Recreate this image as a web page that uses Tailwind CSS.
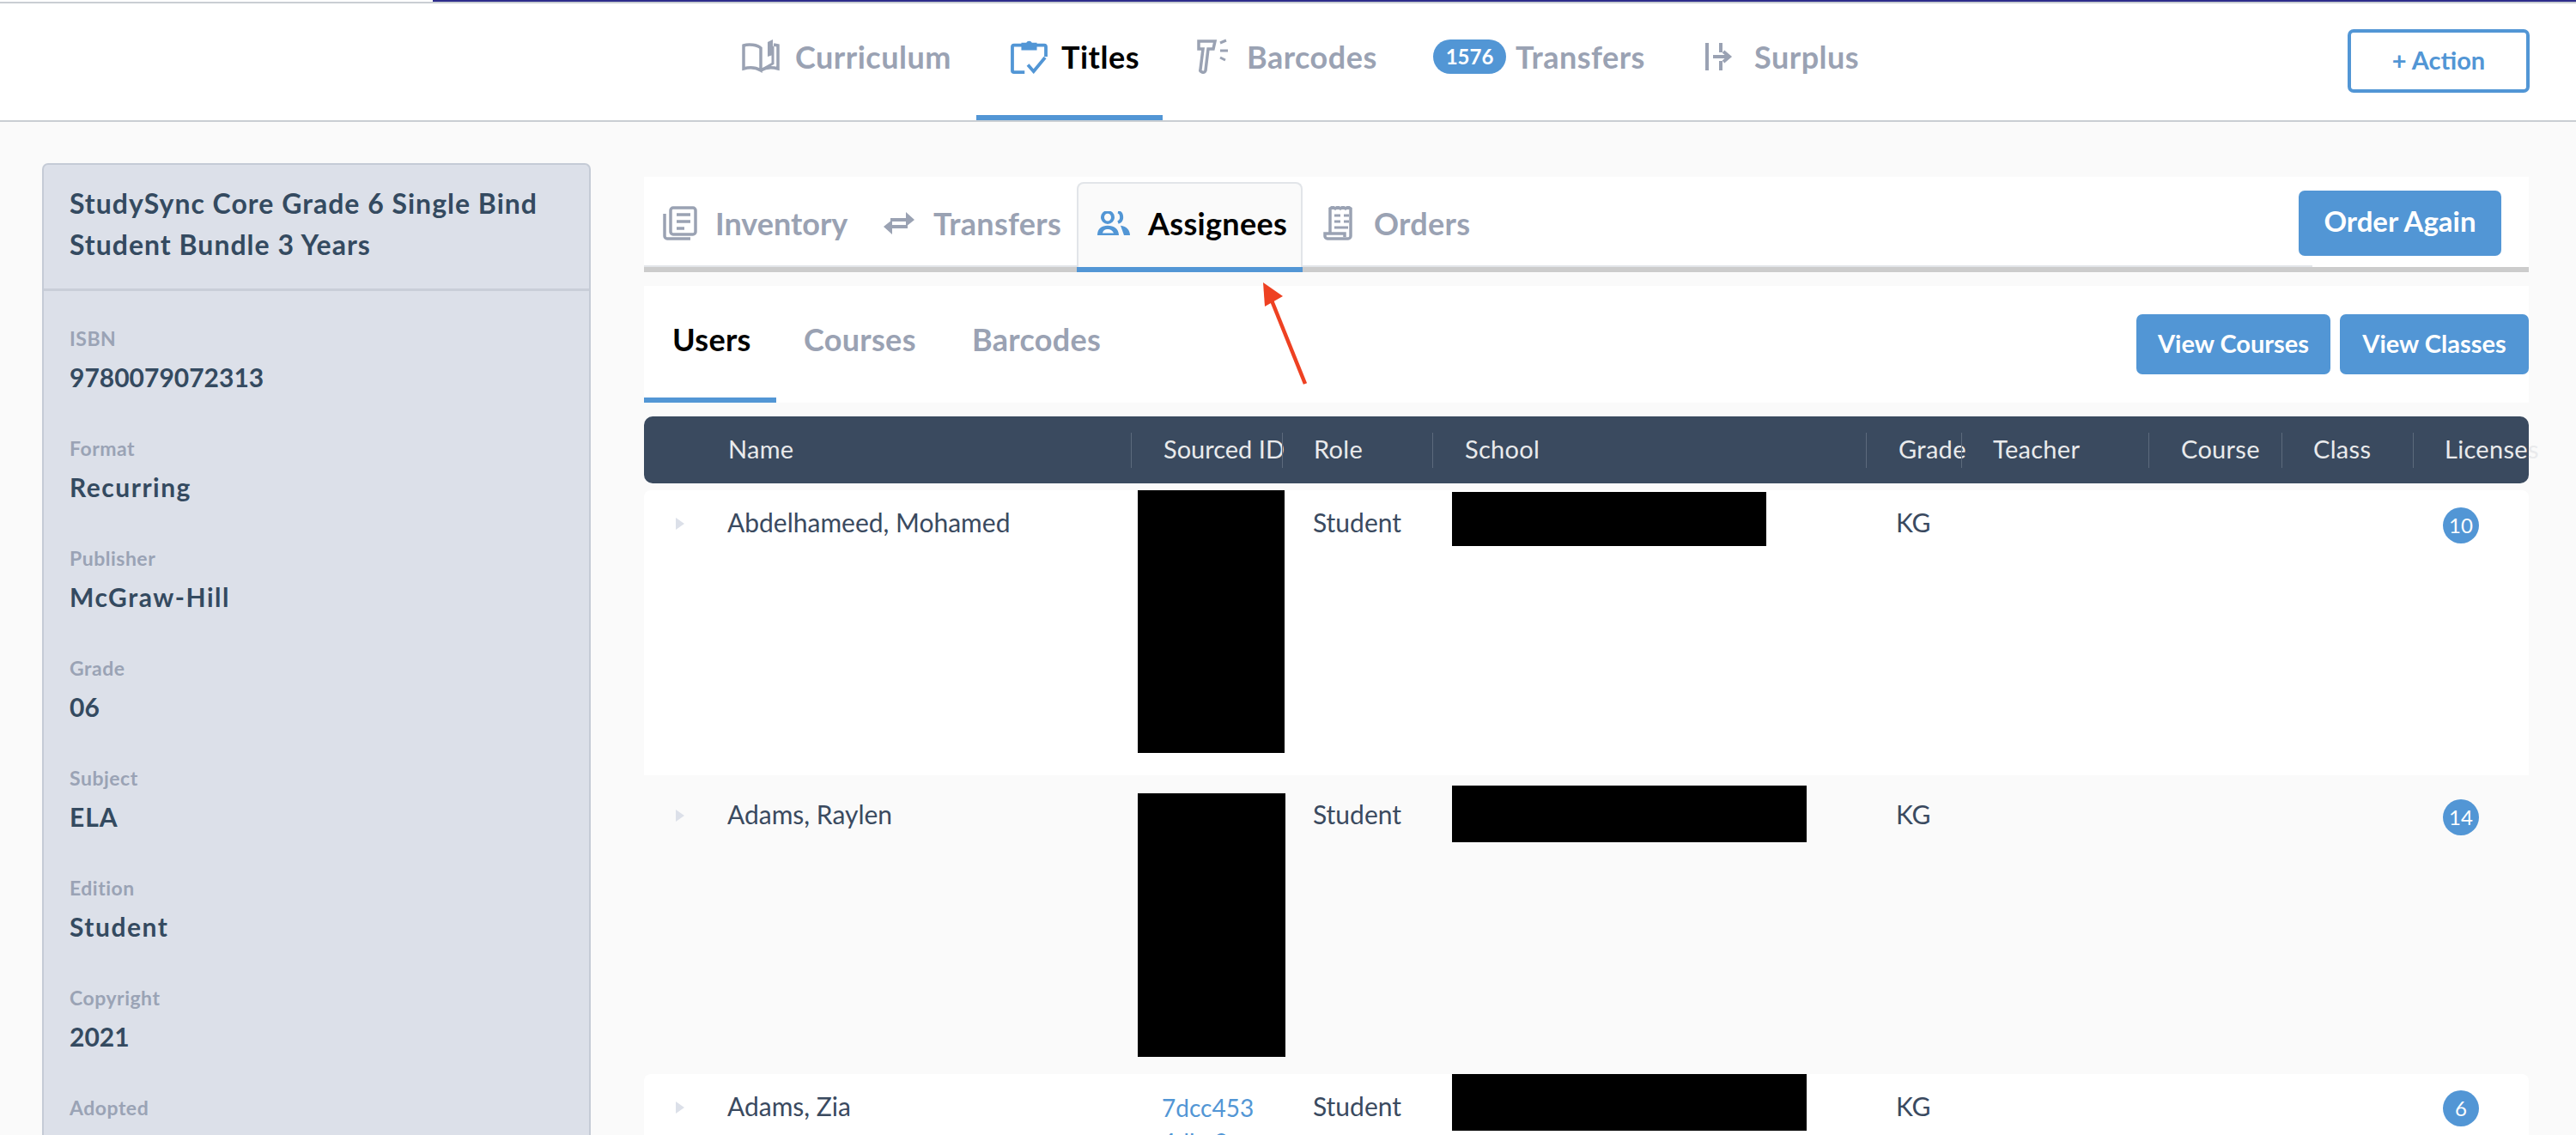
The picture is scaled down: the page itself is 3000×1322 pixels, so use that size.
<!doctype html>
<html><head><meta charset="utf-8">
<script src="https://cdn.jsdelivr.net/npm/@tailwindcss/browser@4"></script>
</head>
<body class="bg-[#fafafa] font-['Lato','Liberation_Sans',sans-serif] w-[3000px] h-[1322px] overflow-hidden relative">
<!-- top strip -->
<div class="h-[4px] flex flex-col"><div class="h-[2px] flex"><div class="w-[504px] bg-white"></div><div class="flex-1 bg-[#2e2d8c]"></div></div><div class="h-[2px] bg-[#c9ced3]"></div></div>
<!-- header -->
<header class="h-[138px] bg-white border-b-2 border-[#c9ced3] relative flex items-center">
  <nav class="flex items-stretch h-full pl-[864px] text-[36px] tracking-[0.5px] font-bold text-[#9aa2b3] leading-none">
    <div class="flex items-center gap-[18px] w-[273px] pb-[12px]">
      <svg class="w-[44px] h-[40px]" viewBox="0 0 44 40" fill="none" stroke="#9aa2b3" stroke-width="3.5"><path d="M22 36V10C18 6 8 5 2 7v27c7-2 15-1 20 2zM22 36c5-3 13-4 20-2V7l-5-1"/><path d="M30 20V3l6-3v18z" fill="#9aa2b3" stroke="none"/><path d="M36 8v20l-14 8" stroke-width="3"/></svg>
      <span>Curriculum</span>
    </div>
    <div class="relative flex items-center gap-[16px] w-[217px] pb-[12px] pl-[40px] text-black">
      <svg class="w-[43px] h-[40px] shrink-0" viewBox="0 0 43 42" fill="none"><path d="M14 7H3a2 2 0 0 0-2 2v29a2 2 0 0 0 2 2h13M29 7h11a2 2 0 0 1 2 2v12" stroke="#5296d5" stroke-width="4"/><path d="M12 4h6a4 4 0 0 1 7 0h6v9H12z" fill="#5296d5"/><path d="M20 31l7 8 14-17" stroke="#5296d5" stroke-width="4"/></svg>
      <span>Titles</span>
      <div class="absolute left-0 right-0 bottom-0 h-[6px] bg-[#5296d5]"></div>
    </div>
    <div class="flex items-center gap-[19px] pl-[39px] w-[315px] pb-[12px]">
      <svg class="w-[40px] h-[42px] shrink-0" viewBox="0 0 40 42" fill="none" stroke="#9aa2b3"><path d="M3 3h19l-2 9h-6l-3 25q-1 3-4 2t-2-3l3-24H3z" stroke-width="3.5"/><path d="M28 5l7-3M28 14h9M28 22l6 3" stroke-width="3"/></svg>
      <span>Barcodes</span>
    </div>
    <div class="flex items-center gap-[11px] w-[317px] pb-[12px]">
      <span class="bg-[#5296d5] text-white rounded-full w-[85px] h-[40px] flex items-center justify-center text-[24px] tracking-normal">1576</span>
      <span>Transfers</span>
    </div>
    <div class="flex items-center gap-[25px] pb-[12px]">
      <svg class="w-[32px] h-[32px] shrink-0" viewBox="0 0 32 32" fill="none" stroke="#9aa2b3" stroke-width="4"><path d="M2 0v32M18 0v11M18 21v11M9 16h18M21 10l7 6-7 6"/></svg>
      <span>Surplus</span>
    </div>
  </nav>
  <button class="absolute left-[2734px] top-[30px] w-[212px] h-[74px] pb-[2px] border-4 border-[#5296d5] rounded-[7px] text-[#5296d5] text-[29px] font-bold flex items-center justify-center">+ Action</button>
</header>
<div class="flex items-start">
  <!-- sidebar -->
  <aside class="ml-[49px] mt-[48px] w-[639px] h-[1132px] overflow-hidden bg-[#dce0e9] border-2 border-b-0 border-[#c5cbd6] rounded-t-[7px] shrink-0">
    <div class="h-[147px] border-b-[3px] border-[#c9ced8] pl-[30px] pt-[21px] text-[32px] leading-[48px] font-bold text-[#344a60] tracking-[1px]">StudySync Core Grade 6 Single Bind<br>Student Bundle 3 Years</div>
    <dl class="pl-[30px] pt-[40px] text-[#344a60]">
      <div class="h-[128px]"><dt class="text-[23px] font-bold text-[#9aa3b5] leading-[30px] tracking-[0.5px]">ISBN</dt><dd class="text-[30px] font-bold leading-[40px] mt-[10px]">9780079072313</dd></div>
      <div class="h-[128px]"><dt class="text-[23px] font-bold text-[#9aa3b5] leading-[30px] tracking-[0.5px]">Format</dt><dd class="text-[30px] font-bold tracking-[1.5px] leading-[40px] mt-[10px]">Recurring</dd></div>
      <div class="h-[128px]"><dt class="text-[23px] font-bold text-[#9aa3b5] leading-[30px] tracking-[0.5px]">Publisher</dt><dd class="text-[30px] font-bold tracking-[1.5px] leading-[40px] mt-[10px]">McGraw-Hill</dd></div>
      <div class="h-[128px]"><dt class="text-[23px] font-bold text-[#9aa3b5] leading-[30px] tracking-[0.5px]">Grade</dt><dd class="text-[30px] font-bold leading-[40px] mt-[10px]">06</dd></div>
      <div class="h-[128px]"><dt class="text-[23px] font-bold text-[#9aa3b5] leading-[30px] tracking-[0.5px]">Subject</dt><dd class="text-[30px] font-bold leading-[40px] tracking-[1px] mt-[10px]">ELA</dd></div>
      <div class="h-[128px]"><dt class="text-[23px] font-bold text-[#9aa3b5] leading-[30px] tracking-[0.5px]">Edition</dt><dd class="text-[30px] font-bold tracking-[1.5px] leading-[40px] mt-[10px]">Student</dd></div>
      <div class="h-[128px]"><dt class="text-[23px] font-bold text-[#9aa3b5] leading-[30px] tracking-[0.5px]">Copyright</dt><dd class="text-[30px] font-bold leading-[40px] mt-[10px]">2021</dd></div>
      <div class="h-[64px]"><dt class="text-[23px] font-bold text-[#9aa3b5] leading-[30px] tracking-[0.5px]">Adopted</dt></div>
    </dl>
  </aside>
  <!-- main -->
  <main class="ml-[62px] w-[2195px] pt-[64px] shrink-0">
    <!-- tabs -->
    <div class="h-[111px] bg-white relative text-[36px] tracking-[0.3px] font-bold text-[#9aa2b3] leading-none">
      <div class="absolute left-0 right-0 bottom-0 h-[6px] bg-[#cccccc]"></div>
      <div class="absolute left-0 right-[252px] bottom-[6px] h-[2px] bg-[#e2e5e9]"></div>
      <div class="relative flex items-stretch h-[105px] pl-[22px]">
        <div class="flex items-center gap-[21px] w-[257px] pt-[2px] tracking-normal">
          <svg class="w-[40px] h-[40px] shrink-0" viewBox="0 0 40 40" fill="none" stroke="#9aa2b3" stroke-width="3.5"><rect x="9" y="2" width="29" height="31" rx="3"/><path d="M2 9v26a3 3 0 0 0 3 3h27"/><path d="M16 10h16M16 18h16M16 26h9" stroke-width="3.5"/></svg>
          <span>Inventory</span>
        </div>
        <div class="flex items-center gap-[22px] w-[225px] pt-[2px]">
          <svg class="w-[36px] h-[28px] shrink-0" viewBox="0 0 36 28" fill="#9aa2b3"><path d="M8 8h18V1l10 9-10 8v-6H10l-2 2z"/><path d="M28 20H10v7L0 18l10-8v6h16l2-2z"/></svg>
          <span>Transfers</span>
        </div>
        <div class="relative flex items-center gap-[20px] w-[263px] h-[99px] mt-[6px] pb-[6px] pl-[21px] bg-[#fafafa] border-2 border-b-0 border-[#e2e5e9] rounded-t-[8px] text-black">
          <svg class="w-[40px] h-[28px] shrink-0" viewBox="0 0 40 32" preserveAspectRatio="none" fill="none"><ellipse cx="13" cy="8" rx="6" ry="7" stroke="#5296d5" stroke-width="4"/><path d="M25 1c5 1 6 12 0 14" stroke="#5296d5" stroke-width="4"/><path d="M1 32c0-9 5-13 12-13s13 4 13 13zM28 19c7 1 11 6 11 13h-7" fill="#5296d5"/><path d="M7 29c1-4 3-5 6-5s5 1 7 5z" fill="#fff"/></svg>
          <span>Assignees</span>
          <div class="absolute left-[-2px] right-[-2px] bottom-[-6px] h-[6px] bg-[#5296d5]"></div>
        </div>
        <div class="flex items-center gap-[23px] pl-[24px] pt-[2px]">
          <svg class="w-[36px] h-[40px] shrink-0" viewBox="0 0 36 40" fill="none" stroke="#9aa2b3" stroke-width="3.5"><path d="M8 32V3l3-2 3 2 3-2 3 2 3-2 3 2 3-2 3 2v32a3 3 0 0 1-3 3H5a3 3 0 0 1-3-3v-3h23v4"/><path d="M13 11h7M24 11h6M13 18h7M24 18h6M13 25h16" stroke-width="3"/></svg>
          <span>Orders</span>
        </div>
      </div>
      <button class="absolute left-[1927px] top-[16px] w-[236px] h-[76px] pb-[6px] rounded-[7px] bg-[#5296d5] text-white text-[33px] tracking-normal font-bold">Order Again</button>
    </div>
    <!-- subtabs -->
    <div class="mt-[16px] h-[136px] bg-white flex text-[36px] tracking-[0.3px] font-bold text-[#9aa2b3] relative leading-none">
      <div class="w-[154px] relative pl-[33px] pt-[44px] text-black">Users<div class="absolute left-0 right-0 bottom-0 h-[6px] bg-[#5296d5]"></div></div>
      <div class="pl-[32px] pt-[44px] w-[228px]">Courses</div>
      <div class="pt-[44px]">Barcodes</div>
      <div class="absolute right-0 top-[33px] flex gap-[11px] text-white text-[29px] tracking-normal font-bold">
        <button class="w-[226px] h-[70px] pb-[4px] rounded-[7px] bg-[#5296d5]">View Courses</button>
        <button class="w-[220px] h-[70px] pb-[4px] rounded-[7px] bg-[#5296d5]">View Classes</button>
      </div>
    </div>
    <!-- table header -->
    <div class="mt-[16px] h-[78px] bg-[#3a4a5f] rounded-[10px] grid grid-cols-[567px_176px_175px_505px_111px_218px_155px_153px_135px] items-center text-[29px] tracking-[0.3px] text-[#e9eaec] leading-none">
      <div class="pl-[98px] h-[41px] flex items-center pb-[3px]">Name</div>
      <div class="border-l border-[#5c6a7c] h-[41px] flex items-center pl-[37px] pb-[3px] whitespace-nowrap tracking-normal">Sourced ID</div>
      <div class="border-l border-[#5c6a7c] h-[41px] flex items-center pl-[36px] pb-[3px]">Role</div>
      <div class="border-l border-[#5c6a7c] h-[41px] flex items-center pl-[37px] pb-[3px]">School</div>
      <div class="border-l border-[#5c6a7c] h-[41px] flex items-center pl-[37px] pb-[3px]">Grade</div>
      <div class="border-l border-[#5c6a7c] h-[41px] flex items-center pl-[36px] pb-[3px]">Teacher</div>
      <div class="border-l border-[#5c6a7c] h-[41px] flex items-center pl-[37px] pb-[3px]">Course</div>
      <div class="border-l border-[#5c6a7c] h-[41px] flex items-center pl-[36px] pb-[3px]">Class</div>
      <div class="border-l border-[#5c6a7c] h-[41px] flex items-center pl-[36px] pb-[3px] whitespace-nowrap">Licenses</div>
    </div>
    <!-- rows -->
    <div class="mt-[8px] text-[30px] text-[#3a4a5f] leading-none">
      <div class="h-[332px] bg-white relative rounded-t-[8px] grid grid-cols-[567px_176px_175px_505px_111px_218px_155px_153px_135px]">
        <div class="pl-[37px] pt-[22px] flex gap-[25px] items-start"><svg class="w-[10px] h-[14px] mt-[10px]" viewBox="0 0 10 14"><path d="M0 0l10 7-10 7z" fill="#dce0e9"/></svg><span class="pl-[25px]">Abdelhameed, Mohamed</span></div>
        <div class="pl-[8px]"><div class="w-[171px] h-[306px] bg-black"></div></div>
        <div class="pt-[22px] pl-[36px]">Student</div>
        <div class="pl-[23px] pt-[2px]"><div class="w-[366px] h-[63px] bg-black"></div></div>
        <div class="pt-[22px] pl-[35px]">KG</div><div></div><div></div><div></div>
        <div class="pl-[35px] pt-[20px]"><span class="w-[42px] h-[42px] rounded-full bg-[#5296d5] text-white text-[24px] flex items-center justify-center">10</span></div>
      </div>
      <div class="h-[348px] relative grid grid-cols-[567px_176px_175px_505px_111px_218px_155px_153px_135px]">
        <div class="pl-[37px] pt-[30px] flex gap-[25px] items-start"><svg class="w-[10px] h-[14px] mt-[10px]" viewBox="0 0 10 14"><path d="M0 0l10 7-10 7z" fill="#dce0e9"/></svg><span class="pl-[25px]">Adams, Raylen</span></div>
        <div class="pl-[8px] pt-[21px]"><div class="w-[172px] h-[307px] bg-black"></div></div>
        <div class="pt-[30px] pl-[36px]">Student</div>
        <div class="pl-[23px] pt-[12px]"><div class="w-[413px] h-[66px] bg-black"></div></div>
        <div class="pt-[30px] pl-[35px]">KG</div><div></div><div></div><div></div>
        <div class="pl-[35px] pt-[28px]"><span class="w-[42px] h-[42px] rounded-full bg-[#5296d5] text-white text-[24px] flex items-center justify-center">14</span></div>
      </div>
      <div class="h-[71px] overflow-hidden bg-white relative rounded-t-[8px] grid grid-cols-[567px_176px_175px_505px_111px_218px_155px_153px_135px]">
        <div class="pl-[37px] pt-[22px] flex gap-[25px] items-start"><svg class="w-[10px] h-[14px] mt-[10px]" viewBox="0 0 10 14"><path d="M0 0l10 7-10 7z" fill="#dce0e9"/></svg><span class="pl-[25px]">Adams, Zia</span></div>
        <div class="pl-[36px] pt-[25px] text-[#5296d5] text-[28px] leading-[40px] -mt-[6px]">7dcc453<br>4dbc3</div>
        <div class="pt-[22px] pl-[36px]">Student</div>
        <div class="pl-[23px]"><div class="w-[413px] h-[66px] bg-black"></div></div>
        <div class="pt-[22px] pl-[35px]">KG</div><div></div><div></div><div></div>
        <div class="pl-[35px] pt-[19px]"><span class="w-[42px] h-[42px] rounded-full bg-[#5296d5] text-white text-[24px] flex items-center justify-center">6</span></div>
      </div>
    </div>
  </main>
</div>
<!-- annotation arrow -->
<svg class="absolute left-[1450px] top-[320px] w-[80px] h-[140px]" viewBox="0 0 80 140"><path d="M31 30L70 127" stroke="#ee4122" stroke-width="4.5" fill="none"/><path d="M21 9L44 25 23 37z" fill="#ee4122"/></svg>
</body></html>
